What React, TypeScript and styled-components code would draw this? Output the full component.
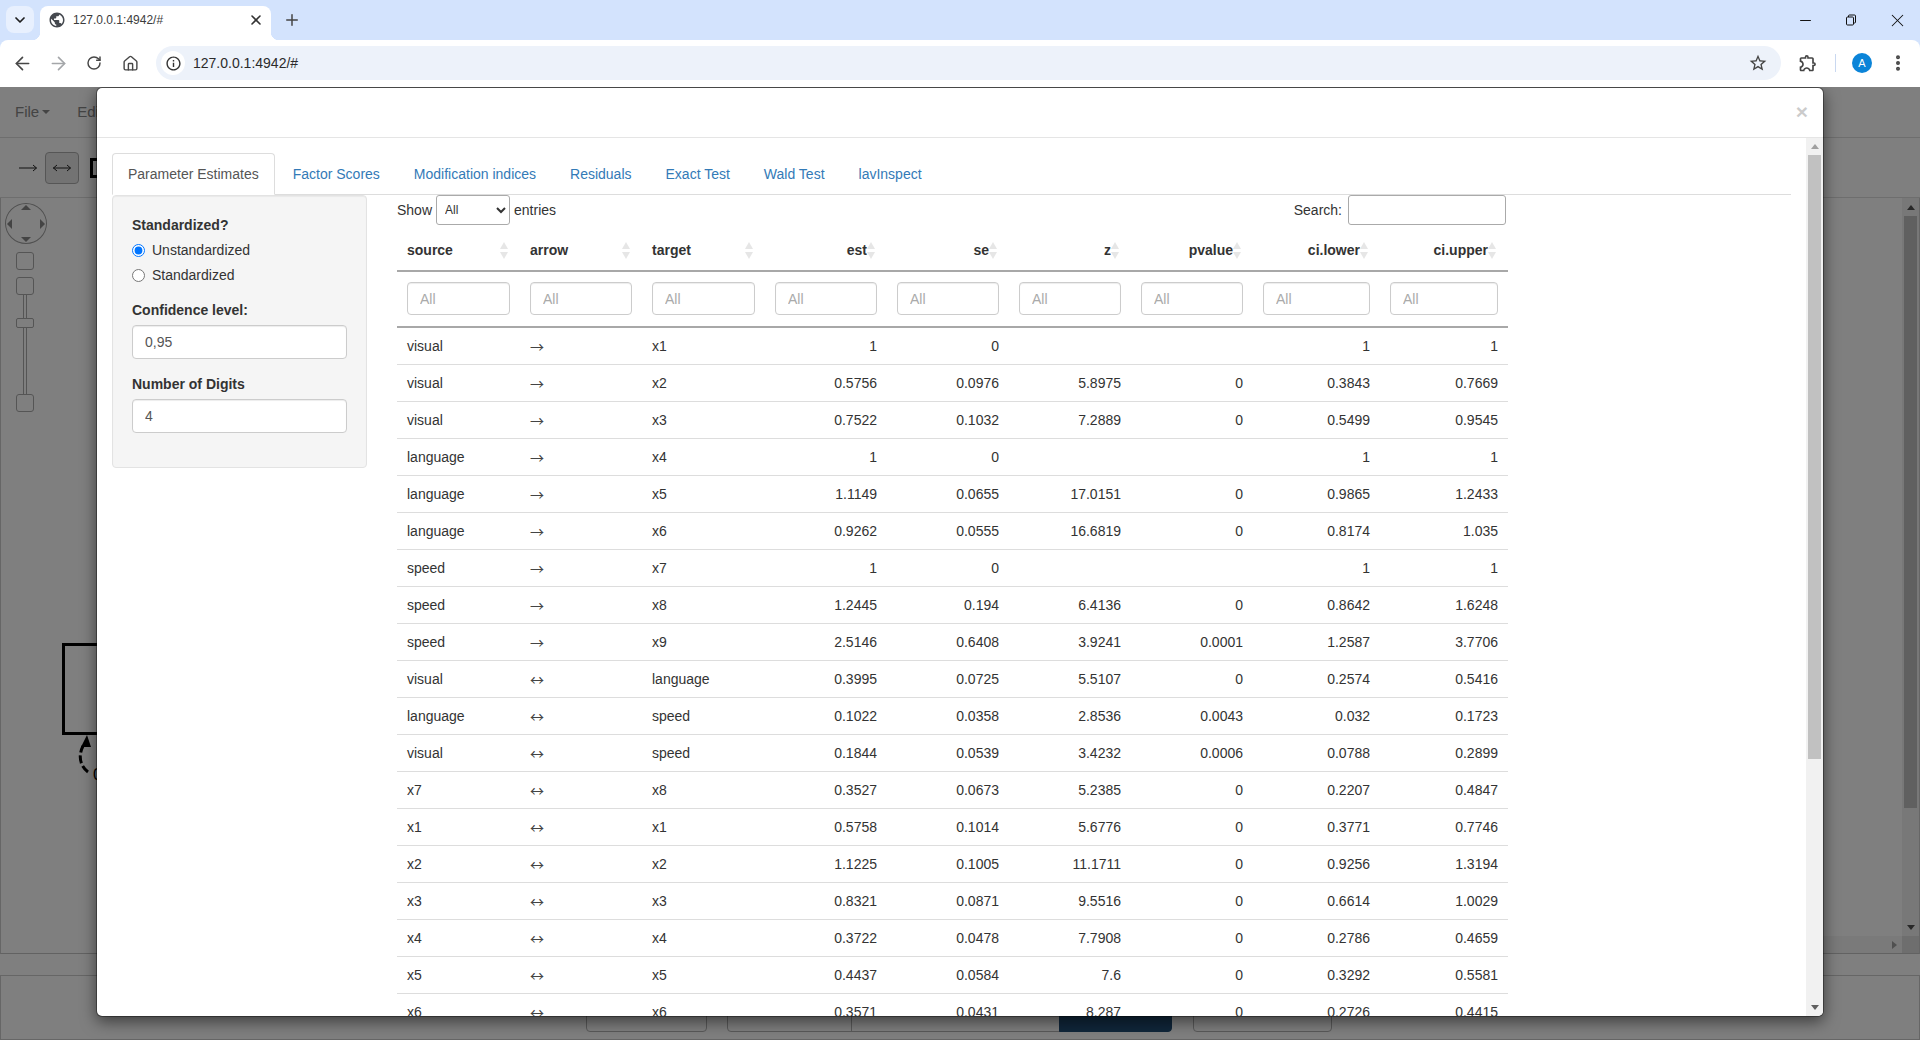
import styled, { createGlobalStyle } from "styled-components";
import {
  ArrowLeft,
  ArrowRight,
  ChevronDown,
  EllipsisVertical,
  House,
  Minus,
  Plus,
  RotateCw,
  X,
} from "lucide-react";
import { MdInfoOutline, MdOutlineExtension, MdPublic, MdStarBorder } from "react-icons/md";

const GlobalStyle = createGlobalStyle`
  html, body {
    margin: 0;
    height: 100%;
    overflow: hidden;
    background: #fff;
  }
  * {
    box-sizing: border-box;
  }
  body {
    font-family: "Liberation Sans", Arial, sans-serif;
    font-size: 14px;
    line-height: 20px;
    color: #333;
  }
`;

const Page = styled.div`
  display: flex;
  flex-direction: column;
  height: 100vh;
  width: 100%;
`;

/* browser chrome */
const TabStrip = styled.div`
  display: flex;
  align-items: flex-start;
  height: 40px;
  padding: 6px 0 0 6px;
  background: #d3e3fd;
  flex: none;
`;

const TabSearch = styled.div`
  display: flex;
  align-items: center;
  justify-content: center;
  width: 28px;
  height: 27px;
  border-radius: 8px;
  background: #e8f0fe;
  color: #1f1f1f;
`;

const BrowserTab = styled.div`
  position: relative;
  display: flex;
  align-items: center;
  width: 231px;
  height: 34px;
  margin-left: 6px;
  padding: 0 7px 6px 8px;
  background: #fff;
  border-radius: 8px 8px 0 0;
  color: #333;

  &::before,
  &::after {
    content: "";
    position: absolute;
    bottom: 0;
    width: 8px;
    height: 8px;
  }
  &::before {
    left: -8px;
    background: radial-gradient(circle at 0 0, transparent 8px, #fff 8.5px);
  }
  &::after {
    right: -8px;
    background: radial-gradient(circle at 100% 0, transparent 8px, #fff 8.5px);
  }
`;

const TabTitle = styled.span`
  flex: 1;
  margin-left: 7px;
  font-size: 12px;
  color: #3c3c3c;
`;

const NewTab = styled.div`
  display: flex;
  margin: 5px 0 0 12px;
  color: #444;
`;

const WindowButtons = styled.div`
  display: flex;
  margin: -6px 0 0 auto;
`;

const WindowButton = styled.div`
  display: flex;
  align-items: center;
  justify-content: center;
  width: 46px;
  height: 40px;
  color: #111;
`;

const ToolbarBacking = styled.div`
  background: #d3e3fd;
  flex: none;
`;

const BrowserToolbar = styled.div`
  display: flex;
  align-items: center;
  height: 47px;
  padding: 0 0 1px 4px;
  background: #fff;
  border-radius: 8px 8px 0 0;
`;

const NavIcon = styled.div<{ $off?: boolean }>`
  display: flex;
  align-items: center;
  justify-content: center;
  width: 36px;
  height: 36px;
  color: ${(p) => (p.$off ? "#a4a6a9" : "#474747")};
`;

const Omnibox = styled.div`
  display: flex;
  align-items: center;
  width: 1625px;
  height: 34px;
  margin-left: 8px;
  padding: 0 13px 0 5px;
  border-radius: 17px;
  background: #edf2fa;
  color: #333;
`;

const SiteInfo = styled.div`
  display: flex;
  align-items: center;
  justify-content: center;
  width: 24px;
  height: 24px;
  border-radius: 50%;
  background: #fff;
  color: #333;
`;

const Url = styled.span`
  flex: 1;
  margin-left: 8px;
  font-size: 14px;
  color: #2b2b2b;
`;

const ExtensionIcon = styled.div`
  display: flex;
  align-items: center;
  justify-content: center;
  width: 32px;
  margin-left: 11px;
  color: #444;
`;

const BarDivider = styled.div`
  width: 1px;
  height: 18px;
  margin-left: 11px;
  background: #c9d8f0;
`;

const Avatar = styled.div`
  display: flex;
  align-items: center;
  justify-content: center;
  width: 20px;
  height: 20px;
  margin-left: 16px;
  border-radius: 50%;
  background: #0b84d8;
  color: #fff;
  font-size: 11px;
`;

const MenuIcon = styled.div`
  display: flex;
  justify-content: center;
  width: 24px;
  margin-left: 14px;
  color: #444;
`;

/* application below the dialog */
const AppFrame = styled.div`
  position: relative;
  flex: 1;
  display: flex;
  flex-direction: column;
  overflow: hidden;
  background: #fff;
`;

const MenuBar = styled.div`
  display: flex;
  align-items: center;
  gap: 27px;
  height: 51px;
  padding-left: 15px;
  border-bottom: 1px solid #ddd;
  flex: none;
`;

const MenuItem = styled.span`
  display: flex;
  align-items: center;
  gap: 3px;
  color: #888;
  font-size: 15px;
`;

const Caret = styled.span`
  width: 0;
  height: 0;
  border-left: 4px solid transparent;
  border-right: 4px solid transparent;
  border-top: 4px solid #888;
`;

const ShapeBar = styled.div`
  display: flex;
  align-items: center;
  height: 60px;
  padding-left: 19px;
  border-bottom: 1px solid #ddd;
  flex: none;
`;

const ShapeButton = styled.div`
  display: flex;
  align-items: center;
  justify-content: center;
  width: 34px;
  height: 32px;
  margin-left: 8px;
  border: 1px solid #adadad;
  border-radius: 4px;
  background: #e6e6e6;
`;

const ShapeSquare = styled.div`
  width: 30px;
  height: 20px;
  margin-left: 11px;
  border: 3px solid #000;
`;

const Workspace = styled.div`
  display: grid;
  grid-template-columns: 1fr 17px;
  grid-template-rows: 1fr 17px;
  height: 756px;
  border-left: 1px solid #ccc;
  border-right: 1px solid #ccc;
  border-bottom: 1px solid #c4c4c4;
  flex: none;
`;

const Canvas = styled.div`
  position: relative;
  padding: 5px 0 0 4px;
  overflow: hidden;
`;

const Joystick = styled.div`
  position: relative;
  width: 42px;
  height: 41px;
  border: 1px solid #a0a0a0;
  border-radius: 50%;
  background: #fff;
`;

const JoyArrow = styled.span<{ $dir: "up" | "down" | "left" | "right" }>`
  position: absolute;
  width: 0;
  height: 0;
  border: 5px solid transparent;
  ${(p) =>
    p.$dir === "up"
      ? "top: 1px; left: 15px; border-bottom: 5px solid #888; border-width: 0 5px 5px;"
      : p.$dir === "down"
        ? "bottom: 1px; left: 15px; border-top: 5px solid #888; border-width: 5px 5px 0;"
        : p.$dir === "left"
          ? "left: 1px; top: 15px; border-right: 5px solid #888; border-width: 5px 5px 5px 0;"
          : "right: 1px; top: 15px; border-left: 5px solid #888; border-width: 5px 0 5px 5px;"}
`;

const ZoomSquare = styled.div<{ $top: number }>`
  width: 18px;
  height: 18px;
  margin: ${(p) => p.$top}px 0 0 11px;
  border: 1px solid #aaa;
  border-radius: 3px;
  background: #fff;
`;

const ZoomTrack = styled.div`
  position: relative;
  width: 4px;
  height: 99px;
  margin-left: 18px;
  border-left: 1px solid #aaa;
  border-right: 1px solid #aaa;
`;

const ZoomThumb = styled.div`
  position: absolute;
  top: 23px;
  left: -8px;
  width: 18px;
  height: 10px;
  border: 1px solid #aaa;
  border-radius: 2px;
  background: #fff;
`;

const NodeBox = styled.div`
  position: absolute;
  left: 61px;
  top: 445px;
  width: 200px;
  height: 92px;
  border: 3px solid #000;
`;

const LoopArrow = styled.svg`
  position: absolute;
  left: 70px;
  top: 535px;
`;

const NodeLabel = styled.span`
  position: absolute;
  left: 92px;
  top: 567px;
  color: #000;
  font-size: 17px;
`;

const OuterVScroll = styled.div`
  display: flex;
  flex-direction: column;
  background: #f1f1f1;
`;

const ScrollArrowBox = styled.div<{ $size: number }>`
  display: flex;
  align-items: center;
  justify-content: center;
  height: ${(p) => p.$size}px;
  flex: none;
`;

const ScrollUp = styled.span<{ $dark?: boolean }>`
  width: 0;
  height: 0;
  border-left: 4px solid transparent;
  border-right: 4px solid transparent;
  border-bottom: 5px solid ${(p) => (p.$dark ? "#505050" : "#a0a0a0")};
`;

const ScrollDown = styled.span<{ $dark?: boolean }>`
  width: 0;
  height: 0;
  border-left: 4px solid transparent;
  border-right: 4px solid transparent;
  border-top: 5px solid ${(p) => (p.$dark ? "#505050" : "#606060")};
`;

const ScrollRight = styled.span`
  width: 0;
  height: 0;
  margin-right: 5px;
  border-top: 4px solid transparent;
  border-bottom: 4px solid transparent;
  border-left: 5px solid #a0a0a0;
`;

const ScrollThumb = styled.div<{ $height: number }>`
  height: ${(p) => p.$height}px;
  margin: 0 2px;
  background: #c1c1c1;
  flex: none;
`;

const ScrollGap = styled.div`
  flex: 1;
`;

const OuterHScroll = styled.div`
  display: flex;
  align-items: center;
  justify-content: flex-end;
  background: linear-gradient(to right, #fff 0%, #fff 70%, #f4f4f4 95%);
`;

const ScrollCorner = styled.div`
  background: #dcdcdc;
`;

const BottomGap = styled.div`
  height: 21px;
  flex: none;
`;

const BottomPanel = styled.div`
  display: flex;
  align-items: flex-end;
  flex: 1;
  padding: 0 0 7px 585px;
  border: 1px solid #ccc;
`;

const ButtonGroup = styled.div`
  display: flex;
`;

const PanelButton = styled.div<{ $width: number; $pos?: "first" | "last"; $active?: boolean }>`
  width: ${(p) => p.$width}px;
  height: 34px;
  margin-left: -1px;
  border: 1px solid ${(p) => (p.$active ? "#204d74" : "#b4b4b4")};
  background: ${(p) => (p.$active ? "#204d74" : "#fff")};
  border-radius: ${(p) =>
    p.$pos === "first" ? "4px 0 0 4px" : p.$pos === "last" ? "0 4px 4px 0" : "0"};
`;

const LoneButton = styled(PanelButton)`
  margin-left: 0;
  border-radius: 4px;
`;

const GroupGap = styled.div`
  width: 21px;
`;

const Backdrop = styled.div`
  position: absolute;
  inset: 0;
  background: rgba(0, 0, 0, 0.5);
`;

/* dialog */
const Modal = styled.div`
  position: absolute;
  top: 0;
  left: 96px;
  width: 1728px;
  height: 930px;
  display: flex;
  flex-direction: column;
  border: 1px solid rgba(0, 0, 0, 0.35);
  border-radius: 6px;
  background: #fff;
  background-clip: padding-box;
  box-shadow: 0 5px 15px rgba(0, 0, 0, 0.5);
  overflow: hidden;
`;

const ModalHeader = styled.div`
  display: flex;
  align-items: center;
  justify-content: flex-end;
  height: 50px;
  padding: 0 15px 3px 0;
  border-bottom: 1px solid #e5e5e5;
  flex: none;
`;

const CloseMark = styled.span`
  font-size: 21px;
  font-weight: 700;
  line-height: 1;
  color: #000;
  opacity: 0.2;
`;

const ModalBody = styled.div`
  display: flex;
  flex: 1;
  min-height: 0;
`;

const ModalContent = styled.div`
  flex: 1;
  min-width: 0;
  padding: 15px 15px 0;
  overflow: hidden;
`;

const ModalScrollbar = styled.div`
  display: flex;
  flex-direction: column;
  width: 17px;
  background: #f1f1f1;
  flex: none;
`;

const Tabs = styled.div`
  display: flex;
  height: 42px;
  border-bottom: 1px solid #ddd;
`;

const TabLink = styled.a<{ $active?: boolean }>`
  height: 42px;
  margin-right: 2px;
  padding: 10px 15px;
  border: 1px solid ${(p) => (p.$active ? "#ddd" : "transparent")};
  border-bottom-color: ${(p) => (p.$active ? "#fff" : "transparent")};
  border-radius: 4px 4px 0 0;
  background: ${(p) => (p.$active ? "#fff" : "transparent")};
  color: ${(p) => (p.$active ? "#555" : "#337ab7")};
  text-decoration: none;
`;

const TabPane = styled.div`
  display: flex;
  align-items: flex-start;
  gap: 30px;
`;

const Well = styled.div`
  width: 255px;
  padding: 19px;
  margin-bottom: 20px;
  border: 1px solid #e3e3e3;
  border-radius: 4px;
  background: #f5f5f5;
  box-shadow: inset 0 1px 1px rgba(0, 0, 0, 0.05);
  flex: none;
`;

const FieldLabel = styled.label`
  display: block;
  margin-bottom: 5px;
  font-weight: 700;
`;

const RadioRow = styled.label`
  display: flex;
  align-items: center;
  gap: 7px;
  height: 20px;
  margin-bottom: 5px;
`;

const RadioInput = styled.input`
  width: 13px;
  height: 13px;
  margin: 0;
`;

const FieldGroup = styled.div`
  margin-bottom: 15px;
`;

const TextField = styled.input`
  display: block;
  width: 100%;
  height: 34px;
  padding: 6px 12px;
  border: 1px solid #ccc;
  border-radius: 4px;
  background: #fff;
  color: #555;
  font: inherit;
  box-shadow: inset 0 1px 1px rgba(0, 0, 0, 0.075);
`;

const TableWrap = styled.div`
  width: 1111px;
  flex: none;
`;

const TableTop = styled.div`
  display: flex;
  align-items: center;
  justify-content: space-between;
  height: 29px;
  margin-bottom: 6px;
  padding-right: 2px;
`;

const LengthLabel = styled.label`
  display: flex;
  align-items: center;
  gap: 4px;
`;

const LengthSelect = styled.select`
  width: 74px;
  height: 30px;
  padding-left: 4px;
  border: 1px solid #aaa;
  border-radius: 3px;
  background: #fff;
  color: #333;
  font-family: inherit;
  font-size: 12px;
`;

const SearchInput = styled.input`
  width: 158px;
  height: 30px;
  margin-left: 6px;
  padding: 5px;
  border: 1px solid #aaa;
  border-radius: 3px;
  background: #fff;
`;

const DataTable = styled.table`
  width: 1111px;
  table-layout: fixed;
  border-collapse: separate;
  border-spacing: 0;
`;

const HeadCell = styled.th<{ $right?: boolean }>`
  position: relative;
  height: 42px;
  padding: 10px ${(p) => (p.$right ? "20px" : "10px")} 10px 10px;
  border-bottom: 2px solid #a8a8a8;
  font-weight: 700;
  color: #333;
  text-align: ${(p) => (p.$right ? "right" : "left")};
`;

const SortMark = styled.span`
  position: absolute;
  top: 12px;
  right: 12px;
  display: flex;
  flex-direction: column;
  gap: 3px;

  &::before,
  &::after {
    content: "";
    width: 0;
    height: 0;
    border-left: 4px solid transparent;
    border-right: 4px solid transparent;
  }
  &::before {
    border-bottom: 7px solid #e6e6e6;
  }
  &::after {
    border-top: 7px solid #e6e6e6;
  }
`;

const FilterCell = styled.th`
  height: 56px;
  padding: 10px 10px 11px;
  border-bottom: 2px solid #a8a8a8;
`;

const FilterInput = styled.input`
  display: block;
  width: 100%;
  height: 33px;
  padding: 6px 12px;
  border: 1px solid #ccc;
  border-radius: 4px;
  background: #fff;
  font: inherit;
  font-weight: 400;
  box-shadow: inset 0 1px 1px rgba(0, 0, 0, 0.075);

  &::placeholder {
    color: #aaa;
    opacity: 1;
  }
`;

const BodyCell = styled.td<{ $right?: boolean }>`
  height: 37px;
  padding: 8px 10px;
  border-bottom: 1px solid #ddd;
  color: #333;
  text-align: ${(p) => (p.$right ? "right" : "left")};
`;

/* the Liberation arrows are short, this face has the long thin ones of the reference */
const ArrowGlyph = styled.div`
  height: 20px;
  overflow: hidden;
  font-family: "Noto Sans CJK JP", "Liberation Sans", sans-serif;
  font-size: 14px;
  line-height: 20px;
  color: #444;
`;

const columns = [
  { name: "source", width: 123 },
  { name: "arrow", width: 122 },
  { name: "target", width: 123 },
  { name: "est", width: 122, right: true },
  { name: "se", width: 122, right: true },
  { name: "z", width: 122, right: true },
  { name: "pvalue", width: 122, right: true },
  { name: "ci.lower", width: 127, right: true },
  { name: "ci.upper", width: 128, right: true },
];

const rows = [
  ["visual", "→", "x1", "1", "0", "", "", "1", "1"],
  ["visual", "→", "x2", "0.5756", "0.0976", "5.8975", "0", "0.3843", "0.7669"],
  ["visual", "→", "x3", "0.7522", "0.1032", "7.2889", "0", "0.5499", "0.9545"],
  ["language", "→", "x4", "1", "0", "", "", "1", "1"],
  ["language", "→", "x5", "1.1149", "0.0655", "17.0151", "0", "0.9865", "1.2433"],
  ["language", "→", "x6", "0.9262", "0.0555", "16.6819", "0", "0.8174", "1.035"],
  ["speed", "→", "x7", "1", "0", "", "", "1", "1"],
  ["speed", "→", "x8", "1.2445", "0.194", "6.4136", "0", "0.8642", "1.6248"],
  ["speed", "→", "x9", "2.5146", "0.6408", "3.9241", "0.0001", "1.2587", "3.7706"],
  ["visual", "↔", "language", "0.3995", "0.0725", "5.5107", "0", "0.2574", "0.5416"],
  ["language", "↔", "speed", "0.1022", "0.0358", "2.8536", "0.0043", "0.032", "0.1723"],
  ["visual", "↔", "speed", "0.1844", "0.0539", "3.4232", "0.0006", "0.0788", "0.2899"],
  ["x7", "↔", "x8", "0.3527", "0.0673", "5.2385", "0", "0.2207", "0.4847"],
  ["x1", "↔", "x1", "0.5758", "0.1014", "5.6776", "0", "0.3771", "0.7746"],
  ["x2", "↔", "x2", "1.1225", "0.1005", "11.1711", "0", "0.9256", "1.3194"],
  ["x3", "↔", "x3", "0.8321", "0.0871", "9.5516", "0", "0.6614", "1.0029"],
  ["x4", "↔", "x4", "0.3722", "0.0478", "7.7908", "0", "0.2786", "0.4659"],
  ["x5", "↔", "x5", "0.4437", "0.0584", "7.6", "0", "0.3292", "0.5581"],
  ["x6", "↔", "x6", "0.3571", "0.0431", "8.287", "0", "0.2726", "0.4415"],
];

const tabs = [
  "Parameter Estimates",
  "Factor Scores",
  "Modification indices",
  "Residuals",
  "Exact Test",
  "Wald Test",
  "lavInspect",
];

function RestoreIcon() {
  return (
    <svg width="12" height="12" viewBox="0 0 12 12" fill="none" stroke="#111" strokeWidth="1">
      <rect x="1.5" y="3" width="7" height="8" rx="1" />
      <path d="M3.5 3V2a1 1 0 0 1 1-1h5a1 1 0 0 1 1 1v6a1 1 0 0 1-1 1h-1" />
    </svg>
  );
}

function ThinArrow({ both }: { both?: boolean }) {
  return (
    <svg width="18" height="10" viewBox="0 0 18 10" fill="none" stroke="#222" strokeWidth="1">
      <path d="M0 5h17.5M14 2l3.5 3-3.5 3" />
      {both && <path d="M4 2L.5 5 4 8" />}
    </svg>
  );
}

export default function App() {
  return (
    <Page>
      <GlobalStyle />
      <TabStrip>
        <TabSearch>
          <ChevronDown size={16} strokeWidth={2.6} />
        </TabSearch>
        <BrowserTab>
          <MdPublic size={18} color="#45494f" />
          <TabTitle>127.0.0.1:4942/#</TabTitle>
          <X size={16} strokeWidth={2.4} />
        </BrowserTab>
        <NewTab>
          <Plus size={18} strokeWidth={2} />
        </NewTab>
        <WindowButtons>
          <WindowButton>
            <Minus size={17} strokeWidth={1.4} />
          </WindowButton>
          <WindowButton>
            <RestoreIcon />
          </WindowButton>
          <WindowButton>
            <X size={21} strokeWidth={1.2} />
          </WindowButton>
        </WindowButtons>
      </TabStrip>

      <ToolbarBacking>
        <BrowserToolbar>
          <NavIcon>
            <ArrowLeft size={21} strokeWidth={1.9} />
          </NavIcon>
          <NavIcon $off>
            <ArrowRight size={21} strokeWidth={1.9} />
          </NavIcon>
          <NavIcon>
            <RotateCw size={16} strokeWidth={2.2} />
          </NavIcon>
          <NavIcon>
            <House size={17} strokeWidth={2} />
          </NavIcon>
          <Omnibox>
            <SiteInfo>
              <MdInfoOutline size={17} />
            </SiteInfo>
            <Url>127.0.0.1:4942/#</Url>
            <MdStarBorder size={20} color="#444" />
          </Omnibox>
          <ExtensionIcon>
            <MdOutlineExtension size={20} />
          </ExtensionIcon>
          <BarDivider />
          <Avatar>A</Avatar>
          <MenuIcon>
            <EllipsisVertical size={20} strokeWidth={2.8} />
          </MenuIcon>
        </BrowserToolbar>
      </ToolbarBacking>

      <AppFrame>
        <MenuBar>
          <MenuItem>
            File
            <Caret />
          </MenuItem>
          <MenuItem>
            Edit
            <Caret />
          </MenuItem>
        </MenuBar>
        <ShapeBar>
          <ThinArrow />
          <ShapeButton>
            <ThinArrow both />
          </ShapeButton>
          <ShapeSquare />
        </ShapeBar>
        <Workspace>
          <Canvas>
            <Joystick>
              <JoyArrow $dir="up" />
              <JoyArrow $dir="down" />
              <JoyArrow $dir="left" />
              <JoyArrow $dir="right" />
            </Joystick>
            <ZoomSquare $top={8} />
            <ZoomSquare $top={7} />
            <ZoomTrack>
              <ZoomThumb />
            </ZoomTrack>
            <ZoomSquare $top={0} />
            <NodeBox />
            <LoopArrow width="30" height="45" viewBox="0 0 30 45">
              <path d="M17 39C9 33 7 23 12 13" fill="none" stroke="#000" strokeWidth="3" strokeDasharray="8 3" />
              <path d="M16 2l-6 12 10 0z" fill="#000" />
            </LoopArrow>
            <NodeLabel>0.58</NodeLabel>
          </Canvas>
          <OuterVScroll>
            <ScrollArrowBox $size={18}>
              <ScrollUp $dark />
            </ScrollArrowBox>
            <ScrollThumb $height={592} />
            <ScrollGap />
            <ScrollArrowBox $size={17}>
              <ScrollDown $dark />
            </ScrollArrowBox>
          </OuterVScroll>
          <OuterHScroll>
            <ScrollRight />
          </OuterHScroll>
          <ScrollCorner />
        </Workspace>
        <BottomGap />
        <BottomPanel>
          <LoneButton $width={121} />
          <GroupGap />
          <ButtonGroup>
            <PanelButton $width={125} $pos="first" />
            <PanelButton $width={209} />
            <PanelButton $width={113} $pos="last" $active />
          </ButtonGroup>
          <GroupGap />
          <LoneButton $width={139} />
        </BottomPanel>

        <Backdrop />

        <Modal>
          <ModalHeader>
            <CloseMark>×</CloseMark>
          </ModalHeader>
          <ModalBody>
            <ModalContent>
              <Tabs>
                {tabs.map((tab, i) => (
                  <TabLink key={tab} href="#" $active={i === 0}>
                    {tab}
                  </TabLink>
                ))}
              </Tabs>
              <TabPane>
                <Well>
                  <FieldLabel>Standardized?</FieldLabel>
                  <FieldGroup>
                    <RadioRow>
                      <RadioInput type="radio" name="std" defaultChecked />
                      Unstandardized
                    </RadioRow>
                    <RadioRow>
                      <RadioInput type="radio" name="std" />
                      Standardized
                    </RadioRow>
                  </FieldGroup>
                  <FieldGroup>
                    <FieldLabel>Confidence level:</FieldLabel>
                    <TextField defaultValue="0,95" />
                  </FieldGroup>
                  <FieldGroup>
                    <FieldLabel>Number of Digits</FieldLabel>
                    <TextField defaultValue="4" />
                  </FieldGroup>
                </Well>
                <TableWrap>
                  <TableTop>
                    <LengthLabel>
                      Show
                      <LengthSelect defaultValue="All">
                        <option>All</option>
                      </LengthSelect>
                      entries
                    </LengthLabel>
                    <label>
                      Search:
                      <SearchInput />
                    </label>
                  </TableTop>
                  <DataTable>
                    <colgroup>
                      {columns.map((c) => (
                        <col key={c.name} width={c.width} />
                      ))}
                    </colgroup>
                    <thead>
                      <tr>
                        {columns.map((c) => (
                          <HeadCell key={c.name} $right={c.right}>
                            {c.name}
                            <SortMark />
                          </HeadCell>
                        ))}
                      </tr>
                      <tr>
                        {columns.map((c) => (
                          <FilterCell key={c.name}>
                            <FilterInput placeholder="All" />
                          </FilterCell>
                        ))}
                      </tr>
                    </thead>
                    <tbody>
                      {rows.map((row, r) => (
                        <tr key={r}>
                          {row.map((cell, i) => (
                            <BodyCell key={i} $right={columns[i].right}>
                              {columns[i].name === "arrow" ? <ArrowGlyph>{cell}</ArrowGlyph> : cell}
                            </BodyCell>
                          ))}
                        </tr>
                      ))}
                    </tbody>
                  </DataTable>
                </TableWrap>
              </TabPane>
            </ModalContent>
            <ModalScrollbar>
              <ScrollArrowBox $size={17}>
                <ScrollUp />
              </ScrollArrowBox>
              <ScrollThumb $height={604} />
              <ScrollGap />
              <ScrollArrowBox $size={17}>
                <ScrollDown />
              </ScrollArrowBox>
            </ModalScrollbar>
          </ModalBody>
        </Modal>
      </AppFrame>
    </Page>
  );
}
